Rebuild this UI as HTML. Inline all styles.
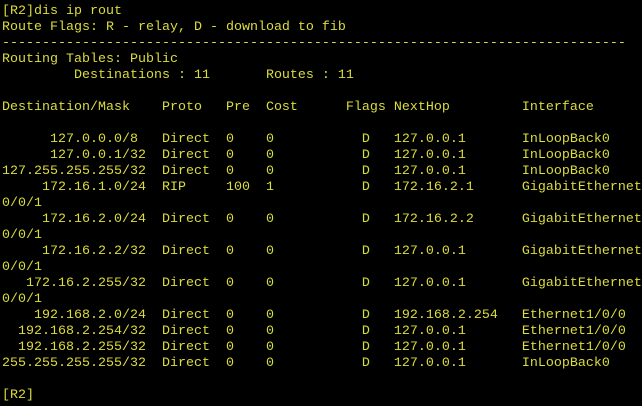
<!DOCTYPE html>
<html><head><style>
html,body{margin:0;padding:0;background:#000;width:642px;height:406px;overflow:hidden}
pre{margin:0;position:absolute;left:2px;top:4px;font-family:"Liberation Mono","Courier New",monospace;font-size:13.33px;line-height:16px;color:#dcdc3c;white-space:pre}
</style></head><body>
<pre>[R2]dis ip rout
Route Flags: R - relay, D - download to fib
------------------------------------------------------------------------------
Routing Tables: Public
         Destinations : 11       Routes : 11

Destination/Mask    Proto   Pre  Cost      Flags NextHop         Interface

      127.0.0.0/8   Direct  0    0           D   127.0.0.1       InLoopBack0
      127.0.0.1/32  Direct  0    0           D   127.0.0.1       InLoopBack0
127.255.255.255/32  Direct  0    0           D   127.0.0.1       InLoopBack0
     172.16.1.0/24  RIP     100  1           D   172.16.2.1      GigabitEthernet
0/0/1
     172.16.2.0/24  Direct  0    0           D   172.16.2.2      GigabitEthernet
0/0/1
     172.16.2.2/32  Direct  0    0           D   127.0.0.1       GigabitEthernet
0/0/1
   172.16.2.255/32  Direct  0    0           D   127.0.0.1       GigabitEthernet
0/0/1
    192.168.2.0/24  Direct  0    0           D   192.168.2.254   Ethernet1/0/0
  192.168.2.254/32  Direct  0    0           D   127.0.0.1       Ethernet1/0/0
  192.168.2.255/32  Direct  0    0           D   127.0.0.1       Ethernet1/0/0
255.255.255.255/32  Direct  0    0           D   127.0.0.1       InLoopBack0

[R2]</pre>
</body></html>
